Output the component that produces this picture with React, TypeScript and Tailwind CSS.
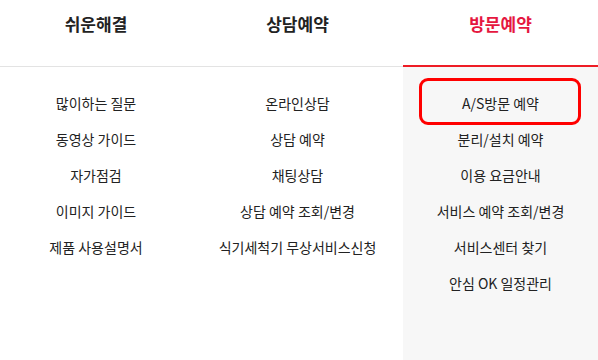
const columns = [
  {
    title: "쉬운해결",
    width: "w-[192px]",
    items: ["많이하는 질문", "동영상 가이드", "자가점검", "이미지 가이드", "제품 사용설명서"],
  },
  {
    title: "상담예약",
    width: "w-[211px]",
    items: ["온라인상담", "상담 예약", "채팅상담", "상담 예약 조회/변경", "식기세척기 무상서비스신청"],
  },
  {
    title: "방문예약",
    width: "flex-1",
    active: true,
    items: [
      "A/S방문 예약",
      "분리/설치 예약",
      "이용 요금안내",
      "서비스 예약 조회/변경",
      "서비스센터 찾기",
      "안심 OK 일정관리",
    ],
  },
];

export default function App() {
  return (
    <div
      className="flex h-[360px] w-[598px] overflow-hidden bg-white text-[#222]"
      style={{ fontFamily: '"Noto Sans CJK KR", "Noto Sans", sans-serif' }}
    >
      {columns.map((col) => (
        <div
          key={col.title}
          className={`${col.width} flex flex-col ${col.active ? "bg-[#f7f7f7]" : ""}`}
        >
          {/* Tab header */}
          <div
            className={`h-[67px] bg-white pt-[11px] text-center text-[17px] font-bold leading-[25px] ${
              col.active
                ? "border-b-2 border-[#ee1c25] text-[#e5173f]"
                : "border-b border-[#e3e3e3] pb-px"
            }`}
          >
            {col.title}
          </div>

          {/* Menu list */}
          <ul className="relative flex flex-col pt-[18px]">
            {col.items.map((item, i) => (
              <li
                key={item}
                className="relative h-[36px] text-center text-[14px] leading-[36px]"
              >
                {col.active && i === 0 && (
                  <span className="absolute left-[16px] right-[17px] top-[-7px] h-[47px] rounded-[9px] border-[3px] border-[#ff0000]" />
                )}
                <span className="relative">{item}</span>
              </li>
            ))}
          </ul>
        </div>
      ))}
    </div>
  );
}
